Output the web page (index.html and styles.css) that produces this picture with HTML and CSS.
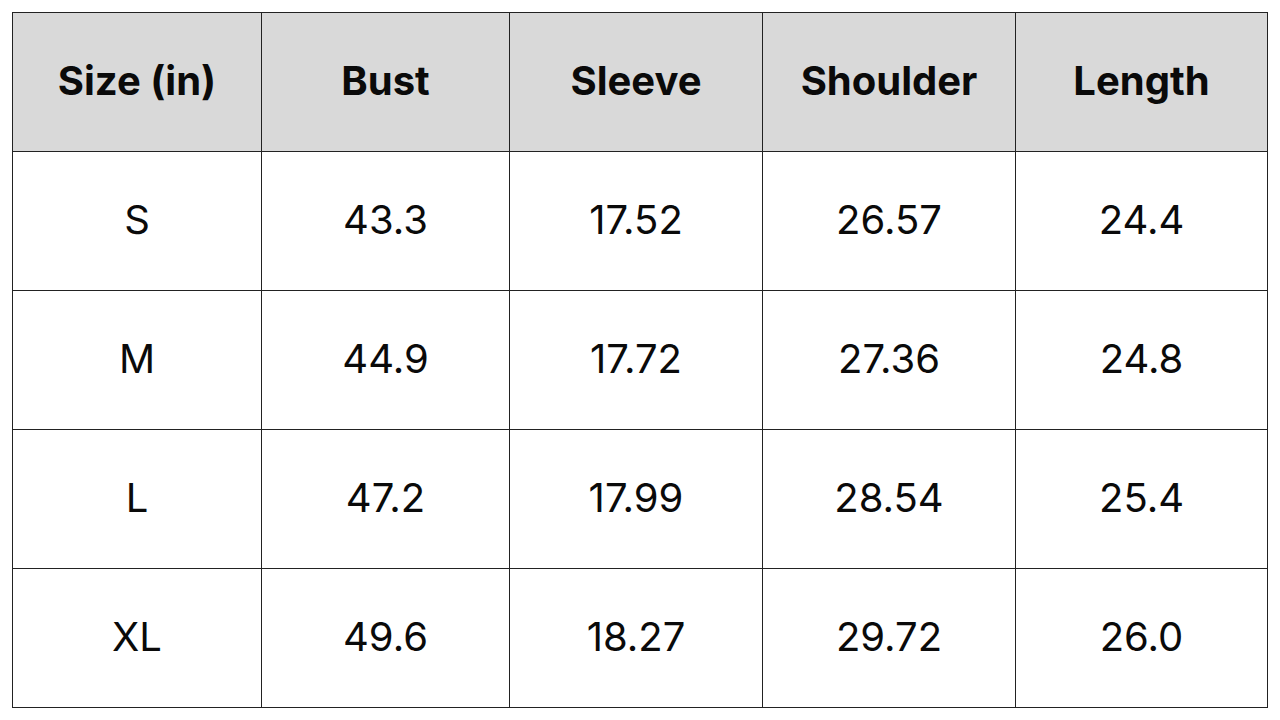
FILE: index.html
```html
<!DOCTYPE html>
<html>
<head>
<meta charset="utf-8">
<link rel="stylesheet" href="styles.css">
</head>
<body>
<table class="size-table">
  <colgroup>
    <col class="c1"><col class="c2"><col class="c3"><col class="c4"><col class="c5">
  </colgroup>
  <thead>
    <tr><th>Size (in)</th><th>Bust</th><th>Sleeve</th><th>Shoulder</th><th>Length</th></tr>
  </thead>
  <tbody>
    <tr><td>S</td><td>43.3</td><td>17.52</td><td>26.57</td><td>24.4</td></tr>
    <tr><td>M</td><td>44.9</td><td>17.72</td><td>27.36</td><td>24.8</td></tr>
    <tr><td>L</td><td>47.2</td><td>17.99</td><td>28.54</td><td>25.4</td></tr>
    <tr><td>XL</td><td>49.6</td><td>18.27</td><td>29.72</td><td>26.0</td></tr>
  </tbody>
</table>
</body>
</html>
```
FILE: styles.css
```css
html, body {
  margin: 0;
  padding: 0;
  background: #ffffff;
}
body {
  padding: 12px 0 0 12px;
  font-family: Inter, "Liberation Sans", sans-serif;
  color: #0a0a0a;
}
.size-table {
  border-collapse: collapse;
  table-layout: fixed;
  width: 1255px;
}
.c1 { width: 249px; }
.c2 { width: 248px; }
.c3 { width: 253px; }
.c4 { width: 253px; }
.c5 { width: 252px; }
.size-table th,
.size-table td {
  border: 1px solid #222;
  height: 139px;
  padding: 0 0 3px 0;
  box-sizing: border-box;
  text-align: center;
  vertical-align: middle;
}
.size-table th {
  background: #d9d9d9;
  font-weight: 700;
  font-size: 40px;
}
.size-table td {
  font-weight: 400;
  font-size: 40px;
}
```
